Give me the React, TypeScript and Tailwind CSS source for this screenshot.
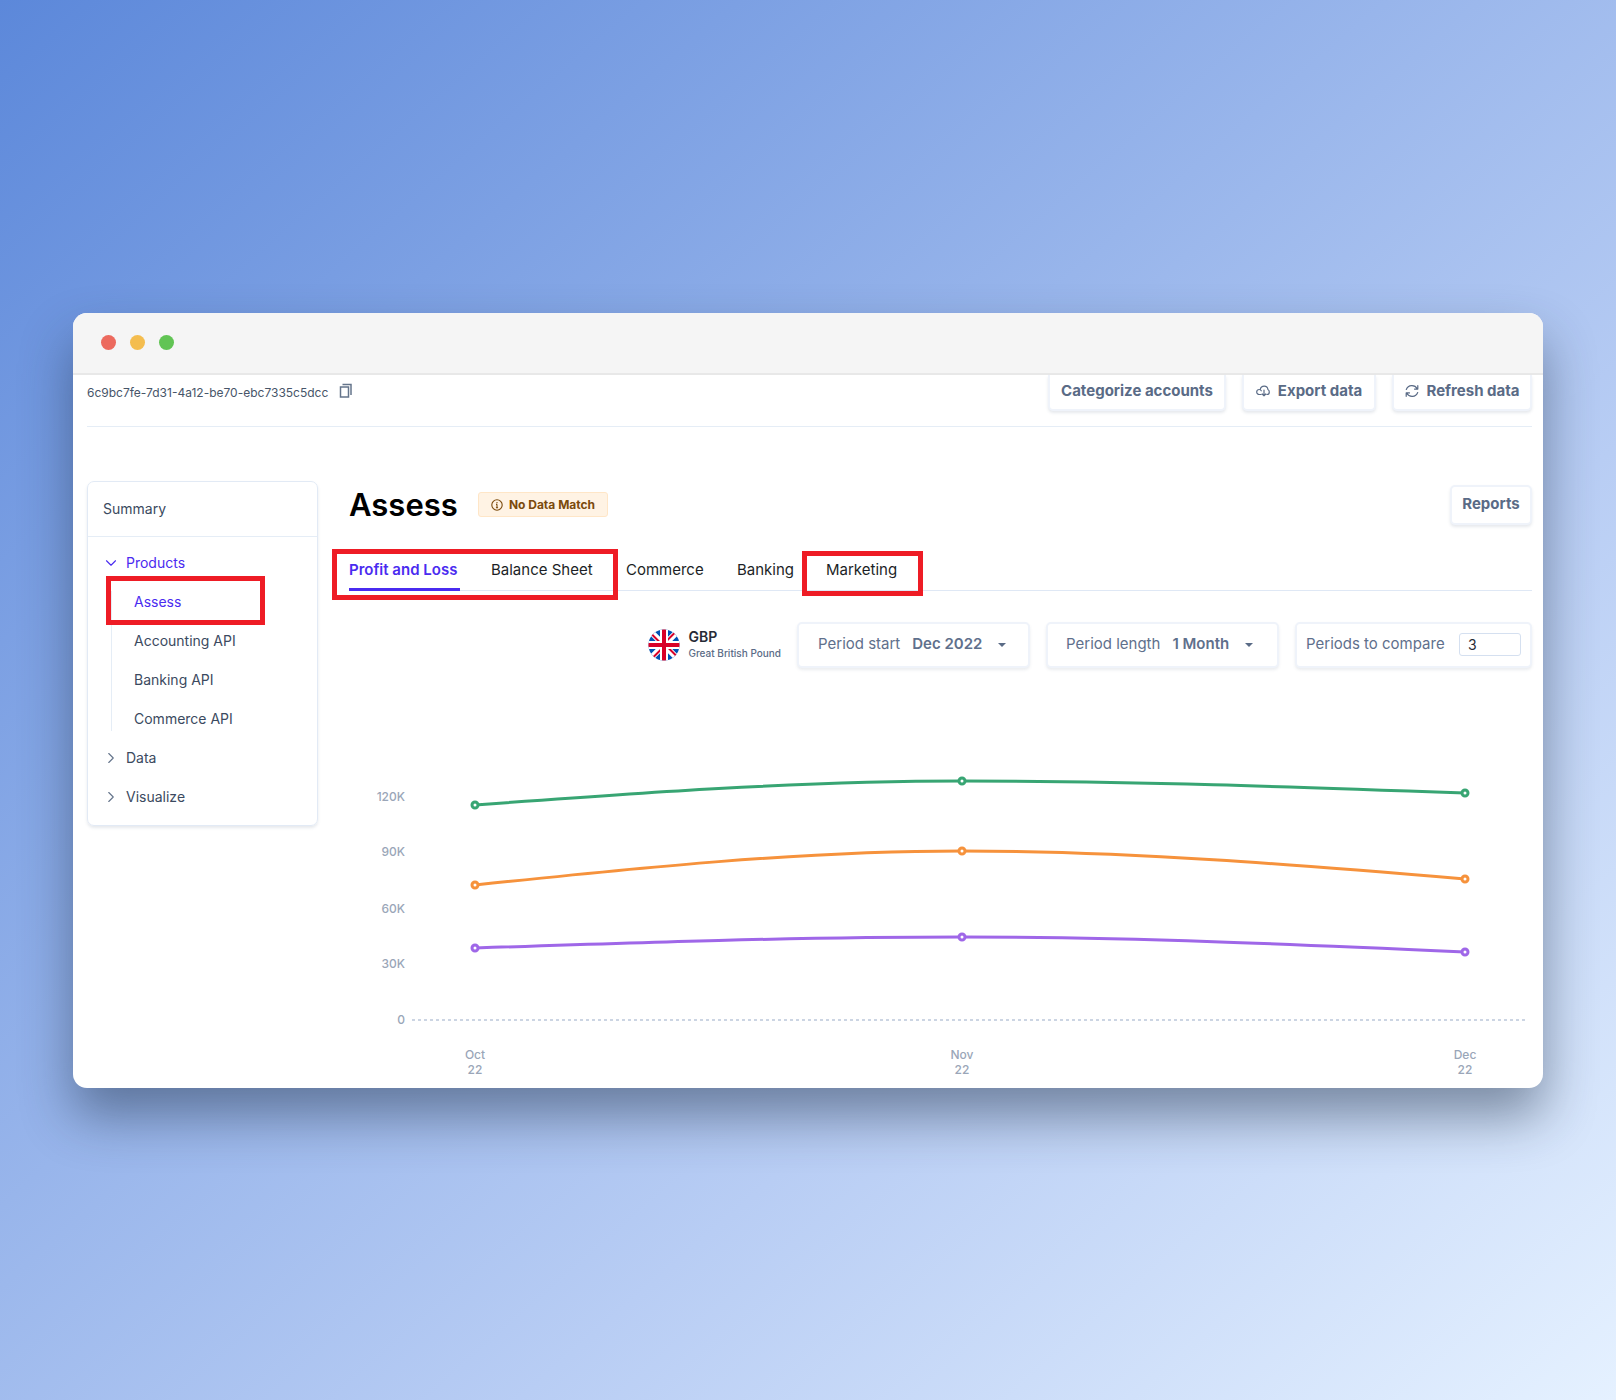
import React from "react";
import { ChevronDown, ChevronRight } from "lucide-react";

const CHART_X = [126, 613, 1116];

const SERIES = [
  { name: "Revenue", color: "#38a573", y: [126, 102, 114] },
  { name: "Costs", color: "#f6923c", y: [206, 172, 200] },
  { name: "Profit", color: "#9f67e8", y: [269, 258, 273] },
];

const Y_LABELS = [
  { text: "120K", y: 118 },
  { text: "90K", y: 173 },
  { text: "60K", y: 230 },
  { text: "30K", y: 285 },
  { text: "0", y: 341 },
];

const X_LABELS = ["Oct", "Nov", "Dec"];

function curve(y: number[]) {
  const [x0, x1, x2] = CHART_X;
  const a = (x1 - x0) / 3;
  const b = (x2 - x1) / 3;
  return [
    `M${x0} ${y[0]}`,
    `C${x0 + a} ${y[0] + (y[1] - y[0]) / 2} ${x1 - a} ${y[1]} ${x1} ${y[1]}`,
    `C${x1 + b} ${y[1]} ${x2 - b} ${y[2] - (y[2] - y[1]) / 2} ${x2} ${y[2]}`,
  ].join(" ");
}

function CopyIcon() {
  return (
    <svg width="14" height="16" viewBox="0 0 14 16" fill="none" stroke="#64748b" strokeWidth="1.5">
      <path d="M1.5 4h8v10h-8z" />
      <path d="M3.5 1.5h8.5v10.5" />
    </svg>
  );
}

function CloudIcon() {
  return (
    <svg width="14" height="14" viewBox="0 0 14 14" fill="none" stroke="currentColor" strokeWidth="1.2" strokeLinecap="round" strokeLinejoin="round">
      <path d="M5.2 10.500H3.400C1.800 10.500 .7 9.400 .7 8S1.800 5.500 3.200 5.500C4.200 5.500 4.900 6 5.300 6.800" />
      <path d="M4.300 5.300C4.700 3.300 6.300 2.200 8.200 2.200C10.200 2.200 11.700 3.600 11.900 5.500C12.800 5.900 13.300 6.800 13.300 7.900C13.300 9.400 12.200 10.500 10.800 10.500" />
      <path d="M8 6v5.800M6.200 10l1.800 1.800L9.800 10" />
    </svg>
  );
}

function RefreshIcon() {
  return (
    <svg width="14" height="14" viewBox="0 0 14 14" fill="none" stroke="currentColor" strokeWidth="1.2" strokeLinecap="round" strokeLinejoin="round">
      <path d="M1.300 5.500A6 6 0 0 1 12.200 4.800M12.800 1.700v3.400H9.500" />
      <path d="M12.700 8.500A6 6 0 0 1 1.800 9.200M1.200 12.300V8.900h3.300" />
    </svg>
  );
}

function InfoIcon() {
  return (
    <svg width="12" height="12" viewBox="0 0 12 12" fill="none" stroke="currentColor" strokeWidth="1.100">
      <circle cx="6" cy="6" r="5.200" />
      <path d="M6 5.200v3.600M6 3v1.200M5 5.400h1M4.900 8.800h2.200" />
    </svg>
  );
}

function FlagIcon() {
  return (
    <svg width="32" height="32" viewBox="0 0 32 32" role="img" aria-label="United Kingdom">
      <defs>
        <clipPath id="flag-circle">
          <circle cx="16" cy="16" r="15.500" />
        </clipPath>
      </defs>
      <g clipPath="url(#flag-circle)">
        <path d="M0 0h32v32H0z" fill="#0052b4" />
        <path d="M0 0l32 32M32 0L0 32" stroke="#fff" strokeWidth="6" />
        <path d="M3 4.500l9 9M29 27.500l-9-9M27.500 3l-9 9M4.500 29l9-9" stroke="#d80027" strokeWidth="2" />
        <path d="M16 0v32M0 16h32" stroke="#fff" strokeWidth="8" />
        <path d="M16 0v32M0 16h32" stroke="#d80027" strokeWidth="4" />
      </g>
    </svg>
  );
}

function Caret() {
  return (
    <svg width="8" height="4" viewBox="0 0 8 4" fill="#5a6b86">
      <path d="M0 0h8L4 4z" />
    </svg>
  );
}

const BUTTON =
  "flex items-center justify-center gap-2 border-2 border-[#eff3fa] bg-white text-[15px] font-bold whitespace-nowrap text-[#5a6b86] shadow-[0_2px_3px_rgba(90,107,134,0.15)]";

const TOP_BUTTON = "h-9 rounded-b-[5px] border-t-0 pb-px";

const FIELD =
  "flex h-[46px] items-center rounded-[5px] border-2 border-[#eff3fa] bg-white text-[15px] whitespace-nowrap text-[#5f708c] shadow-[0_2px_3px_rgba(90,107,134,0.12)]";

function TopBar() {
  return (
    <header className="flex h-[52px] items-start justify-between border-b border-[#e5edf6]">
      <div className="flex items-center gap-[11px] pt-1.5 text-xs text-[#475569]">
        <span className="pt-1">6c9bc7fe-7d31-4a12-be70-ebc7335c5dcc</span>
        <button type="button" aria-label="Copy identifier">
          <CopyIcon />
        </button>
      </div>
      <div className="flex gap-4">
        <button type="button" className={`${BUTTON} ${TOP_BUTTON} w-[178px]`}>
          Categorize accounts
        </button>
        <button type="button" className={`${BUTTON} ${TOP_BUTTON} w-[134px]`}>
          <CloudIcon />
          Export data
        </button>
        <button type="button" className={`${BUTTON} ${TOP_BUTTON} w-[140px]`}>
          <RefreshIcon />
          Refresh data
        </button>
      </div>
    </header>
  );
}

function Sidebar() {
  return (
    <nav className="w-[231px] shrink-0 self-start rounded-[7px] border border-[#e2eaf5] pb-2 text-sm text-[#3b4a60] shadow-[0_2px_3px_rgba(90,107,134,0.15)]">
      <a href="#summary" className="flex h-[55px] items-center border-b border-[#e5edf6] px-[15px]">
        Summary
      </a>
      <ul className="pt-[7px]">
        <li>
          <a href="#products" className="flex h-[39px] items-center gap-1.5 px-[14px] text-[#4a2bf0]">
            <ChevronDown size={18} strokeWidth={1.5} />
            Products
          </a>
          <ul className="relative ml-[23px] before:absolute before:inset-y-2 before:left-0 before:w-px before:bg-[#e5edf6]">
            <li className="relative">
              <a href="#assess" className="flex h-[39px] items-center pl-[23px] text-[#4a2bf0]">
                Assess
              </a>
              <div className="pointer-events-none absolute -top-[7px] -left-[5px] h-[49px] w-[159px] border-5 border-[#ee1c25]" />
            </li>
            {["Accounting API", "Banking API", "Commerce API"].map((item) => (
              <li key={item}>
                <a href="#api" className="flex h-[39px] items-center pl-[23px]">
                  {item}
                </a>
              </li>
            ))}
          </ul>
        </li>
        {["Data", "Visualize"].map((item) => (
          <li key={item}>
            <a href="#section" className="flex h-[39px] items-center gap-1.5 px-[14px]">
              <ChevronRight size={18} strokeWidth={1.5} color="#64748b" />
              {item}
            </a>
          </li>
        ))}
      </ul>
    </nav>
  );
}

function Tabs() {
  return (
    <div role="tablist" className="mt-[21px] flex h-[45px] border-b border-[#dfe8f5] text-[15px] text-[#1c1f26]">
      <div className="relative flex gap-[31px]">
        <button type="button" role="tab" aria-selected="true" className="-mb-px w-[111px] border-b-3 border-[#4a2bf0] pt-2 text-left font-semibold whitespace-nowrap text-[#4a2bf0]">
          Profit and Loss
        </button>
        <button type="button" role="tab" className="w-[104px] pt-1.5 text-left whitespace-nowrap">
          Balance Sheet
        </button>
        <div className="pointer-events-none absolute top-[3px] -left-[17px] h-[51px] w-[286px] border-5 border-[#ee1c25]" />
      </div>
      <button type="button" role="tab" className="ml-[31px] w-[80px] pt-1.5 text-left">
        Commerce
      </button>
      <button type="button" role="tab" className="ml-[31px] w-[58px] pt-1.5 text-left">
        Banking
      </button>
      <div className="relative ml-[31px] flex">
        <button type="button" role="tab" className="w-[73px] pt-1.5 text-left">
          Marketing
        </button>
        <div className="pointer-events-none absolute top-[5px] -left-[24px] h-[45px] w-[121px] border-5 border-[#ee1c25]" />
      </div>
    </div>
  );
}

function Filters() {
  return (
    <div className="mt-[31px] flex items-center justify-end gap-4">
      <div className="flex items-center gap-2">
        <FlagIcon />
        <div className="flex flex-col">
          <span className="text-sm leading-4 font-semibold text-[#262b36]">GBP</span>
          <span className="text-[10px] leading-4 font-medium whitespace-nowrap text-[#5a6b86]">Great British Pound</span>
        </div>
      </div>
      <button type="button" className={`${FIELD} w-[233px] gap-3 pl-[19px]`}>
        <span>Period start</span>
        <span className="font-semibold">Dec 2022</span>
        <span className="ml-1">
          <Caret />
        </span>
      </button>
      <button type="button" className={`${FIELD} w-[233px] gap-3 pl-[18px]`}>
        <span>Period length</span>
        <span className="font-semibold">1 Month</span>
        <span className="ml-1">
          <Caret />
        </span>
      </button>
      <label className={`${FIELD} w-[237px] justify-between px-[9px]`}>
        Periods to compare
        <input
          type="text"
          defaultValue="3"
          className="h-[23px] w-[62px] rounded-[3px] border border-[#d5e0f0] px-2 text-sm text-[#262b36]"
        />
      </label>
    </div>
  );
}

function Chart() {
  return (
    <svg className="mt-[11px] block w-full" viewBox="0 0 1183 409" fontSize="12" fill="#9aa6b8">
      {Y_LABELS.map((label) => (
        <text key={label.text} x="56" y={label.y + 4} textAnchor="end" fontWeight="500">
          {label.text}
        </text>
      ))}
      <path d="M63 341H1176" stroke="#ccd5e3" strokeWidth="2" strokeDasharray="3 3" />
      {SERIES.map((series) => (
        <g key={series.name} stroke={series.color} strokeWidth="3">
          <path d={curve(series.y)} fill="none" />
          {CHART_X.map((x, i) => (
            <circle key={x} cx={x} cy={series.y[i]} r="3" fill="#fff" />
          ))}
        </g>
      ))}
      {X_LABELS.map((label, i) => (
        <text key={label} textAnchor="middle" fontWeight="500">
          <tspan x={CHART_X[i]} y="380">
            {label}
          </tspan>
          <tspan x={CHART_X[i]} y="395">
            22
          </tspan>
        </text>
      ))}
    </svg>
  );
}

export default function App() {
  return (
    <div className="flex min-h-screen items-center bg-[linear-gradient(139deg,#5c88da_0%,#b8cdf4_66%,#e5f1ff_100%)] px-[73px] font-['Inter',sans-serif]">
      <div className="w-full overflow-hidden rounded-[14px] bg-white shadow-[0_28px_52px_rgba(30,45,70,0.48)]">
        <div className="flex h-[62px] items-center gap-[14px] border-b-2 border-[#e8e8e8] bg-[#f5f5f5] pl-[28px]">
          <span className="size-[15px] rounded-full bg-[#ec6a5e]" />
          <span className="size-[15px] rounded-full bg-[#f4bd4f]" />
          <span className="size-[15px] rounded-full bg-[#61c454]" />
        </div>
        <div className="pr-[11px] pl-[14px]">
          <TopBar />
          <div className="mt-[54px] flex gap-[31px]">
            <Sidebar />
            <main className="min-w-0 flex-1">
              <div className="mt-1 flex items-center">
                <h1 className="w-[105px] text-[31px] leading-10 font-semibold text-black">Assess</h1>
                <span className="ml-6 flex h-[25px] w-[130px] items-center justify-center gap-1.5 rounded-[3px] border border-[#ffe6c7] bg-[#fff3e4] text-xs font-bold whitespace-nowrap text-[#7b4a0c]">
                  <InfoIcon />
                  No Data Match
                </span>
                <button type="button" className={`${BUTTON} ml-auto h-10 w-[82px] rounded-[5px]`}>
                  Reports
                </button>
              </div>
              <Tabs />
              <Filters />
              <Chart />
            </main>
          </div>
        </div>
      </div>
    </div>
  );
}
